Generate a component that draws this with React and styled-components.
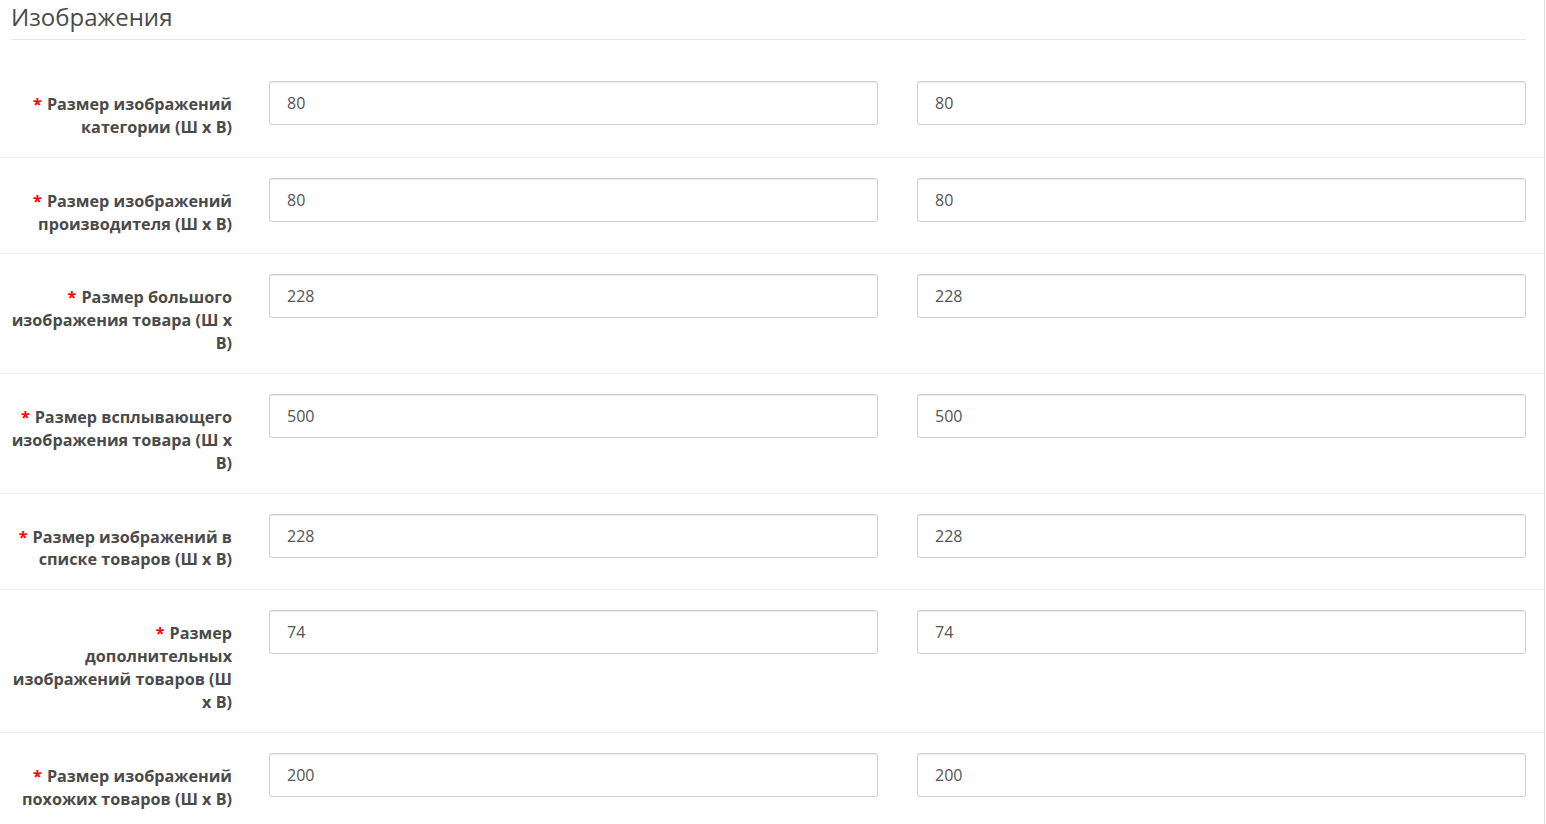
import React from 'react'
import styled, { createGlobalStyle } from 'styled-components'

const GlobalStyle = createGlobalStyle`
  html, body { margin: 0; padding: 0; background: #fff; }
  body { font-family: "Open Sans", "Liberation Sans", sans-serif; color: #4a4a4a; }
  * { box-sizing: border-box; }
`

const Page = styled.div`
  width: 1545px;
  min-height: 824px;
  border-right: 1px solid #dedede;
`

const Fieldset = styled.fieldset`
  margin: 0;
  padding: 0;
  border: 0;
  min-width: 0;
`

const Legend = styled.legend`
  display: block;
  width: calc(100% - 29px);
  margin: 0 0 21px 11px;
  padding: 0 0 5px;
  font-size: 24px;
  line-height: 34px;
  font-weight: 400;
  color: #4a4a4a;
  border-bottom: 1px solid #e5e5e5;
  float: left;
  & + * { clear: both; }
`

const FormGroup = styled.div`
  display: grid;
  grid-template-columns: 221px 1fr;
  column-gap: 37px;
  padding: 20px 18px 18px 11px;
  & + & { border-top: 1px solid #ededed; }
`

const Label = styled.label`
  text-align: right;
  font-size: 16.2px;
  font-weight: 700;
  line-height: 22.86px;
  padding-top: 12px;
  color: #4a4a4a;
`

const Required = styled.span`
  color: #f00;
  margin-right: 5px;
`

const Inputs = styled.div`
  display: grid;
  grid-template-columns: 1fr 1fr;
  column-gap: 39px;
  align-self: start;
`

const Input = styled.input`
  display: block;
  width: 100%;
  height: 44px;
  padding: 0 17px;
  font-family: inherit;
  font-size: 16px;
  color: #555;
  background: #fff;
  border: 1px solid #ccc;
  border-radius: 3px;
  box-shadow: inset 0 1px 1px rgba(0, 0, 0, 0.075);
  outline: none;
`

const rows = [
  { label: 'Размер изображений категории (Ш x В)', w: '80', h: '80' },
  { label: 'Размер изображений производителя (Ш x В)', w: '80', h: '80' },
  { label: 'Размер большого изображения товара (Ш x В)', w: '228', h: '228' },
  { label: 'Размер всплывающего изображения товара (Ш x В)', w: '500', h: '500' },
  { label: 'Размер изображений в списке товаров (Ш x В)', w: '228', h: '228' },
  { label: 'Размер дополнительных изображений товаров (Ш x В)', w: '74', h: '74' },
  { label: 'Размер изображений похожих товаров (Ш x В)', w: '200', h: '200' },
]

export default function App() {
  return (
    <Page>
      <GlobalStyle />
      <Fieldset>
        <Legend>Изображения</Legend>
        <div>
          {rows.map((r, i) => (
            <FormGroup key={i}>
              <Label><Required>*</Required>{r.label}</Label>
              <Inputs>
                <Input defaultValue={r.w} />
                <Input defaultValue={r.h} />
              </Inputs>
            </FormGroup>
          ))}
        </div>
      </Fieldset>
    </Page>
  )
}
